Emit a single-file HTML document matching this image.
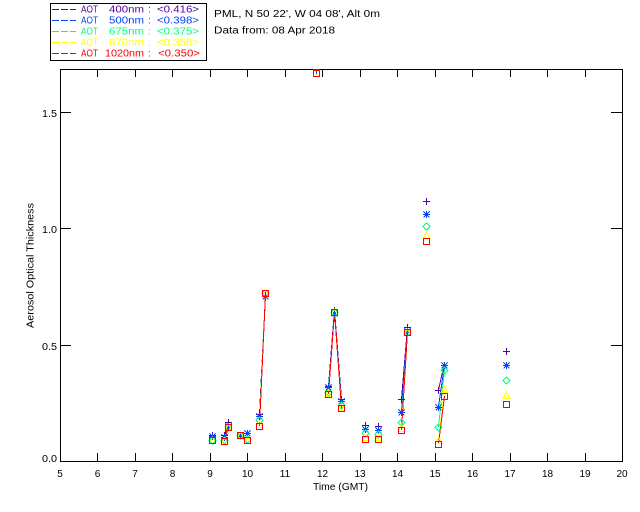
<!DOCTYPE html>
<html><head><meta charset="utf-8"><style>
html,body{margin:0;padding:0;background:#fff}
svg{display:block}
text{font-family:"Liberation Sans",sans-serif;font-size:10px;fill:#000}
.c{text-anchor:middle}.r{text-anchor:end}
</style></head><body>
<svg width="640" height="512" viewBox="0 0 640 512" xmlns="http://www.w3.org/2000/svg">
<rect width="640" height="512" fill="#fff"/>
<defs>
<g id="p"><path d="M-3.5 0H3.5M0-3.5V3.5" fill="none" stroke="#55009f"/></g>
<g id="s"><path d="M-3.5 0H3.5M0-3.5V3.5M-3-3L3 3M-3 3L3-3" fill="none" stroke="#0044ff"/></g>
<g id="d"><path d="M0-3.5L3.5 0L0 3.5L-3.5 0Z" fill="none" stroke="#00ff80"/></g>
<g id="t"><path d="M0-3.5L3.5 3L-3.5 3Z" fill="none" stroke="#ffff00"/></g>
<g id="q"><path d="M-3-3H3V3H-3Z" fill="none" stroke="#ff0000"/></g>
</defs>

<g fill="none" stroke="#000" shape-rendering="crispEdges">
<path d="M50.5 3.5H206.5V60.5H50.5Z"/>
<path d="M60.5 69.5H622.5V461.5H60.5Z"/>
<path d="M97.5 461V453M135.5 461V453M172.5 461V453M210.5 461V453M247.5 461V453M285.5 461V453M322.5 461V453M360.5 461V453M397.5 461V453M435.5 461V453M472.5 461V453M510.5 461V453M547.5 461V453M585.5 461V453"/>
<path d="M97.5 69V77M135.5 69V77M172.5 69V77M210.5 69V77M247.5 69V77M285.5 69V77M322.5 69V77M360.5 69V77M397.5 69V77M435.5 69V77M472.5 69V77M510.5 69V77M547.5 69V77M585.5 69V77"/>
<path d="M60 345.5H71M60 228.5H71M60 112.5H71M622 345.5H611M622 228.5H611M622 112.5H611"/>
</g>

<!-- legend lines -->
<g fill="none" shape-rendering="crispEdges" stroke-dasharray="7 2">
<path d="M52 9.5H76" stroke="#55009f"/>
<path d="M52 20.5H76" stroke="#0044ff"/>
<path d="M52 31.5H76" stroke="#00ff80"/>
<path d="M52 42.5H76" stroke="#ffff00"/>
<path d="M52 53.5H76" stroke="#ff0000"/>
</g>

<!-- legend text -->
<g style="fill:#55009f"><text style="fill:inherit" x="81" y="12.5" textLength="17" lengthAdjust="spacingAndGlyphs">AOT</text><text style="fill:inherit" x="109" y="12.5" textLength="35" lengthAdjust="spacingAndGlyphs">400nm</text><text style="fill:inherit" x="148" y="12.5">:</text><text style="fill:inherit" x="157" y="12.5" textLength="42" lengthAdjust="spacingAndGlyphs">&lt;0.416&gt;</text></g>
<g style="fill:#0044ff"><text style="fill:inherit" x="81" y="23.5" textLength="17" lengthAdjust="spacingAndGlyphs">AOT</text><text style="fill:inherit" x="109" y="23.5" textLength="35" lengthAdjust="spacingAndGlyphs">500nm</text><text style="fill:inherit" x="148" y="23.5">:</text><text style="fill:inherit" x="157" y="23.5" textLength="42" lengthAdjust="spacingAndGlyphs">&lt;0.398&gt;</text></g>
<g style="fill:#00ff80"><text style="fill:inherit" x="81" y="34.5" textLength="17" lengthAdjust="spacingAndGlyphs">AOT</text><text style="fill:inherit" x="109" y="34.5" textLength="35" lengthAdjust="spacingAndGlyphs">675nm</text><text style="fill:inherit" x="148" y="34.5">:</text><text style="fill:inherit" x="157" y="34.5" textLength="42" lengthAdjust="spacingAndGlyphs">&lt;0.375&gt;</text></g>
<g style="fill:#ffff00"><text style="fill:inherit" x="81" y="45.5" textLength="17" lengthAdjust="spacingAndGlyphs">AOT</text><text style="fill:inherit" x="109" y="45.5" textLength="35" lengthAdjust="spacingAndGlyphs">870nm</text><text style="fill:inherit" x="148" y="45.5">:</text><text style="fill:inherit" x="157" y="45.5" textLength="42" lengthAdjust="spacingAndGlyphs">&lt;0.358&gt;</text></g>
<g style="fill:#ff0000"><text style="fill:inherit" x="81" y="56.5" textLength="17" lengthAdjust="spacingAndGlyphs">AOT</text><text style="fill:inherit" x="105" y="56.5" textLength="39" lengthAdjust="spacingAndGlyphs">1020nm</text><text style="fill:inherit" x="148" y="56.5">:</text><text style="fill:inherit" x="158" y="56.5" textLength="42" lengthAdjust="spacingAndGlyphs">&lt;0.350&gt;</text></g>

<!-- header -->
<text x="214" y="17" textLength="166" lengthAdjust="spacingAndGlyphs">PML, N 50 22', W 04 08', Alt 0m</text>
<text x="214" y="33.5" textLength="121" lengthAdjust="spacingAndGlyphs">Data from: 08 Apr 2018</text>

<!-- y labels -->
<text x="42" y="117" textLength="15" lengthAdjust="spacingAndGlyphs">1.5</text>
<text x="42" y="233" textLength="15" lengthAdjust="spacingAndGlyphs">1.0</text>
<text x="42" y="350" textLength="15" lengthAdjust="spacingAndGlyphs">0.5</text>
<text x="42" y="462" textLength="15" lengthAdjust="spacingAndGlyphs">0.0</text>
<text transform="translate(33.5 328) rotate(-90)" textLength="125" lengthAdjust="spacingAndGlyphs">Aerosol Optical Thickness</text>

<!-- x labels -->
<g class="c">
<text class="c" x="60" y="477">5</text><text class="c" x="97.5" y="477">6</text><text class="c" x="135" y="477">7</text><text class="c" x="172.5" y="477">8</text><text class="c" x="210" y="477">9</text><text class="c" x="247.5" y="477">10</text><text class="c" x="285" y="477">11</text><text class="c" x="322.5" y="477">12</text><text class="c" x="360" y="477">13</text><text class="c" x="397.5" y="477">14</text><text class="c" x="435" y="477">15</text><text class="c" x="472.5" y="477">16</text><text class="c" x="510" y="477">17</text><text class="c" x="547.5" y="477">18</text><text class="c" x="585" y="477">19</text><text class="c" x="622" y="477">20</text>
</g>
<text x="313" y="490" textLength="55" lengthAdjust="spacingAndGlyphs">Time (GMT)</text>

<!-- data lines -->
<g fill="none" shape-rendering="crispEdges">
<g stroke="#55009f"><path d="M224.5 435L228.5 422M259.5 414L265.5 295M328.5 386L334.5 310L341.5 399M401.5 399L407.5 327M438.5 390L444.5 363"/></g>
<g stroke="#0044ff"><path d="M224.5 437L228.5 426M259.5 416L265.5 296M328.5 387L334.5 313L341.5 401M401.5 412L407.5 331M438.5 407L444.5 365"/></g>
<g stroke="#00ff80"><path d="M224.5 439L228.5 428M259.5 420L265.5 293M328.5 392L334.5 312L341.5 405M401.5 422L407.5 332M438.5 427L444.5 370"/></g>
<g stroke="#ffff00"><path d="M224.5 440L228.5 427M259.5 424L265.5 293M328.5 393L334.5 312L341.5 407M401.5 428L407.5 332M438.5 440L444.5 389"/></g>
<g stroke="#ff0000"><path d="M224.5 441L228.5 427M259.5 426L265.5 293M328.5 394L334.5 312L341.5 408M401.5 430L407.5 332M438.5 444L444.5 396"/></g>
</g>

<!-- markers -->
<g shape-rendering="crispEdges">
<use href="#p" x="212.5" y="435.5"/><use href="#s" x="212.5" y="436.5"/><use href="#d" x="212.5" y="440.5"/><use href="#t" x="212.5" y="440.5"/><use href="#q" x="212.5" y="440.5"/>
<use href="#p" x="224.5" y="435.5"/><use href="#s" x="224.5" y="437.5"/><use href="#d" x="224.5" y="440.5"/><use href="#t" x="224.5" y="441.5"/><use href="#q" x="224.5" y="441.5"/>
<use href="#p" x="228.5" y="422.5"/><use href="#s" x="228.5" y="426.5"/><use href="#d" x="228.5" y="427.5"/><use href="#t" x="228.5" y="427.5"/><use href="#q" x="228.5" y="427.5"/>
<use href="#p" x="240.5" y="435.5"/><use href="#s" x="240.5" y="435.5"/><use href="#d" x="240.5" y="435.5"/><use href="#t" x="240.5" y="435.5"/><use href="#q" x="240.5" y="435.5"/>
<use href="#p" x="247.5" y="433.5"/><use href="#s" x="247.5" y="433.5"/><use href="#d" x="247.5" y="439.5"/><use href="#t" x="247.5" y="440.5"/><use href="#q" x="247.5" y="440.5"/>
<use href="#p" x="259.5" y="414.5"/><use href="#s" x="259.5" y="416.5"/><use href="#d" x="259.5" y="420.5"/><use href="#t" x="259.5" y="424.5"/><use href="#q" x="259.5" y="426.5"/>
<use href="#p" x="265.5" y="295.5"/><use href="#s" x="265.5" y="296.5"/><use href="#d" x="265.5" y="293.5"/><use href="#t" x="265.5" y="293.5"/><use href="#q" x="265.5" y="293.5"/>
<path d="M313 69.5H320" stroke="#0044ff" fill="none" shape-rendering="crispEdges"/>
<path d="M316.5 71V75" stroke="#0044ff" fill="none" shape-rendering="crispEdges"/>
<path d="M315 74.5H318" stroke="#ffff00" fill="none" shape-rendering="crispEdges"/>
<use href="#q" x="316.5" y="73.5"/>
<use href="#p" x="328.5" y="386.5"/><use href="#s" x="328.5" y="387.5"/><use href="#d" x="328.5" y="392.5"/><use href="#t" x="328.5" y="393.5"/><use href="#q" x="328.5" y="394.5"/>
<use href="#p" x="334.5" y="310.5"/><use href="#s" x="334.5" y="313.5"/><use href="#d" x="334.5" y="312.5"/><use href="#t" x="334.5" y="312.5"/><use href="#q" x="334.5" y="312.5"/>
<use href="#p" x="341.5" y="399.5"/><use href="#s" x="341.5" y="401.5"/><use href="#d" x="341.5" y="405.5"/><use href="#t" x="341.5" y="407.5"/><use href="#q" x="341.5" y="408.5"/>
<use href="#p" x="365.5" y="425.5"/><use href="#s" x="365.5" y="429.5"/><use href="#d" x="365.5" y="433.5"/><use href="#t" x="365.5" y="437.5"/><use href="#q" x="365.5" y="439.5"/>
<use href="#p" x="378.5" y="426.5"/><use href="#s" x="378.5" y="430.5"/><use href="#d" x="378.5" y="434.5"/><use href="#t" x="378.5" y="437.5"/><use href="#q" x="378.5" y="439.5"/>
<use href="#p" x="401.5" y="399.5"/><use href="#s" x="401.5" y="412.5"/><use href="#d" x="401.5" y="422.5"/><use href="#t" x="401.5" y="428.5"/><use href="#q" x="401.5" y="430.5"/>
<use href="#p" x="407.5" y="327.5"/><use href="#s" x="407.5" y="331.5"/><use href="#d" x="407.5" y="332.5"/><use href="#t" x="407.5" y="332.5"/><use href="#q" x="407.5" y="332.5"/>
<use href="#p" x="426.5" y="201.5"/><use href="#s" x="426.5" y="214.5"/><use href="#d" x="426.5" y="226.5"/><use href="#t" x="426.5" y="235.5"/><use href="#q" x="426.5" y="241.5"/>
<use href="#p" x="438.5" y="390.5"/><use href="#s" x="438.5" y="407.5"/><use href="#d" x="438.5" y="427.5"/><use href="#t" x="438.5" y="440.5"/><use href="#q" x="438.5" y="444.5"/>
<use href="#p" x="444.5" y="365.5"/><use href="#s" x="444.5" y="365.5"/><use href="#d" x="444.5" y="370.5"/><use href="#t" x="444.5" y="389.5"/><use href="#q" x="444.5" y="396.5"/>
<use href="#p" x="506.5" y="351.5"/><use href="#s" x="506.5" y="365.5"/><use href="#d" x="506.5" y="380.5"/><use href="#t" x="506.5" y="395.5"/><use href="#q" x="506.5" y="404.5"/>
</g>
</svg>
</body></html>
